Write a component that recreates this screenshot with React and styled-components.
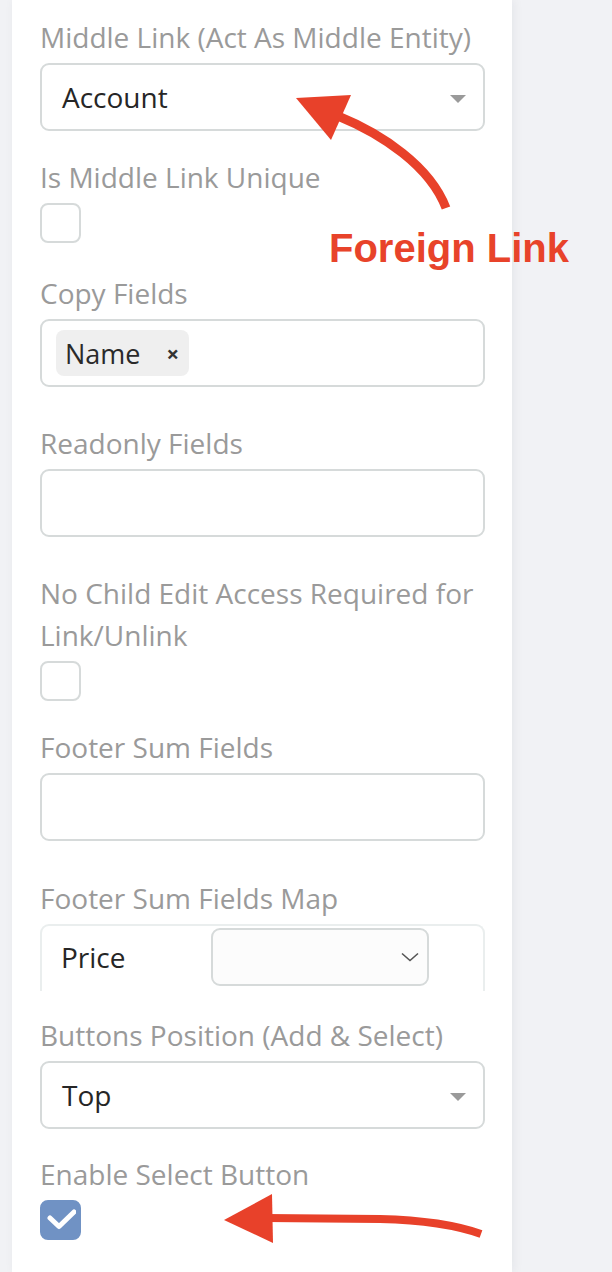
import { createGlobalStyle, styled } from 'styled-components';

const GlobalStyle = createGlobalStyle`
  body {
    margin: 0;
    background: #f1f2f5;
    font-family: 'Open Sans', 'Noto Sans', sans-serif;
  }
`;

const Page = styled.div`
  position: relative;
  width: 612px;
  min-height: 1272px;
  overflow: hidden;
`;

const Panel = styled.div`
  box-sizing: border-box;
  margin-left: 12px;
  width: 500px;
  min-height: 1272px;
  padding: 16px 27px 0 28px;
  background: #fff;
  box-shadow: 2px 0 10px rgba(20, 30, 50, 0.06);
`;

const Field = styled.div`
  margin-bottom: ${(p) => p.$space}px;
`;

const Label = styled.label`
  display: block;
  margin-bottom: 5px;
  font-size: 28px;
  line-height: 42px;
  color: #9a9a9a;
`;

const Box = styled.div`
  position: relative;
  box-sizing: border-box;
  display: flex;
  align-items: center;
  height: 68px;
  padding: 0 20px;
  border: 2px solid #d6dada;
  border-radius: 9px;
  background: #fff;
  font-size: 28px;
  color: #262626;
`;

const Caret = styled.span`
  position: absolute;
  right: 17px;
  top: 30px;
  width: 0;
  height: 0;
  border-left: 8px solid transparent;
  border-right: 8px solid transparent;
  border-top: 8px solid #9a9a9a;
`;

const TagBox = styled(Box)`
  padding: 0 14px;
`;

const Tag = styled.span`
  display: inline-flex;
  align-items: center;
  height: 46px;
  padding: 0 10px 0 9px;
  border-radius: 8px;
  background: #efefef;
  font-size: 27px;
  color: #2a2a2a;
`;

const Remove = styled.span`
  margin-left: 26px;
  font-size: 22px;
  font-weight: 700;
  color: #333;
`;

const Check = styled.span`
  box-sizing: border-box;
  display: flex;
  align-items: center;
  justify-content: center;
  width: 41px;
  height: 40px;
  border: 2px solid ${(p) => (p.$on ? '#7092c4' : '#d6dada')};
  border-radius: 8px;
  background: ${(p) => (p.$on ? '#7092c4' : '#fff')};
`;

const MapTable = styled.div`
  box-sizing: border-box;
  height: 67px;
  overflow: hidden;
  border: 2px solid #eaeeee;
  border-bottom: none;
  border-radius: 9px 9px 0 0;
`;

const MapRow = styled.div`
  display: flex;
  align-items: center;
  padding-top: 2px;
`;

const MapName = styled.div`
  box-sizing: border-box;
  width: 169px;
  padding-left: 19px;
  font-size: 28px;
  color: #262626;
`;

const MiniSelect = styled.div`
  box-sizing: border-box;
  display: flex;
  align-items: center;
  justify-content: flex-end;
  width: 218px;
  height: 58px;
  padding-right: 8px;
  border: 2px solid #d6dada;
  border-radius: 9px;
  background: #fcfcfc;
`;

const Overlay = styled.svg`
  position: absolute;
  left: 0;
  top: 0;
  pointer-events: none;
`;

const Note = styled.span`
  position: absolute;
  left: 329px;
  top: 228px;
  font-family: 'Liberation Sans', Arial, sans-serif;
  font-weight: 700;
  font-size: 40px;
  line-height: 40px;
  color: #e8432a;
  white-space: nowrap;
`;

const SelectField = ({ label, value, space }) => (
  <Field $space={space}>
    <Label>{label}</Label>
    <Box>
      {value}
      <Caret />
    </Box>
  </Field>
);

const CheckField = ({ label, on, space }) => (
  <Field $space={space}>
    <Label>{label}</Label>
    <Check $on={on}>
      {on && (
        <svg width="30" height="22" viewBox="0 0 30 22">
          <path d="M4 9 L13 17.5 L28 3" fill="none" stroke="#fff" strokeWidth="5" strokeLinecap="round" strokeLinejoin="round" />
        </svg>
      )}
    </Check>
  </Field>
);

const InputField = ({ label, space }) => (
  <Field $space={space}>
    <Label>{label}</Label>
    <Box />
  </Field>
);

const App = () => (
  <Page>
    <GlobalStyle />
    <Panel>
      <SelectField label="Middle Link (Act As Middle Entity)" value="Account" space={25} />
      <CheckField label="Is Middle Link Unique" space={29} />
      <Field $space={35}>
        <Label>Copy Fields</Label>
        <TagBox>
          <Tag>
            Name
            <Remove>×</Remove>
          </Tag>
        </TagBox>
      </Field>
      <InputField label="Readonly Fields" space={35} />
      <CheckField label="No Child Edit Access Required for Link/Unlink" space={25} />
      <InputField label="Footer Sum Fields" space={36} />
      <Field $space={23}>
        <Label>Footer Sum Fields Map</Label>
        <MapTable>
          <MapRow>
            <MapName>Price</MapName>
            <MiniSelect>
              <svg width="18" height="10" viewBox="0 0 18 10">
                <path d="M1 1.5 L9 8.5 L17 1.5" fill="none" stroke="#555" strokeWidth="1.6" />
              </svg>
            </MiniSelect>
          </MapRow>
        </MapTable>
      </Field>
      <SelectField label="Buttons Position (Add & Select)" value="Top" space={24} />
      <CheckField label="Enable Select Button" on space={0} />
    </Panel>

    <Note>Foreign Link</Note>
    <Overlay width="612" height="1272" viewBox="0 0 612 1272">
      <path d="M338 116 C382 134 430 166 446 208" fill="none" stroke="#e8412a" strokeWidth="9" />
      <polygon points="296,98 351,95 331,140" fill="#e8412a" />
      <path d="M266 1218 L380 1219 C420 1220 456 1225 481 1234" fill="none" stroke="#e8412a" strokeWidth="8" />
      <polygon points="224,1220 272,1194 273,1243" fill="#e8412a" />
    </Overlay>
  </Page>
);

export default App;
